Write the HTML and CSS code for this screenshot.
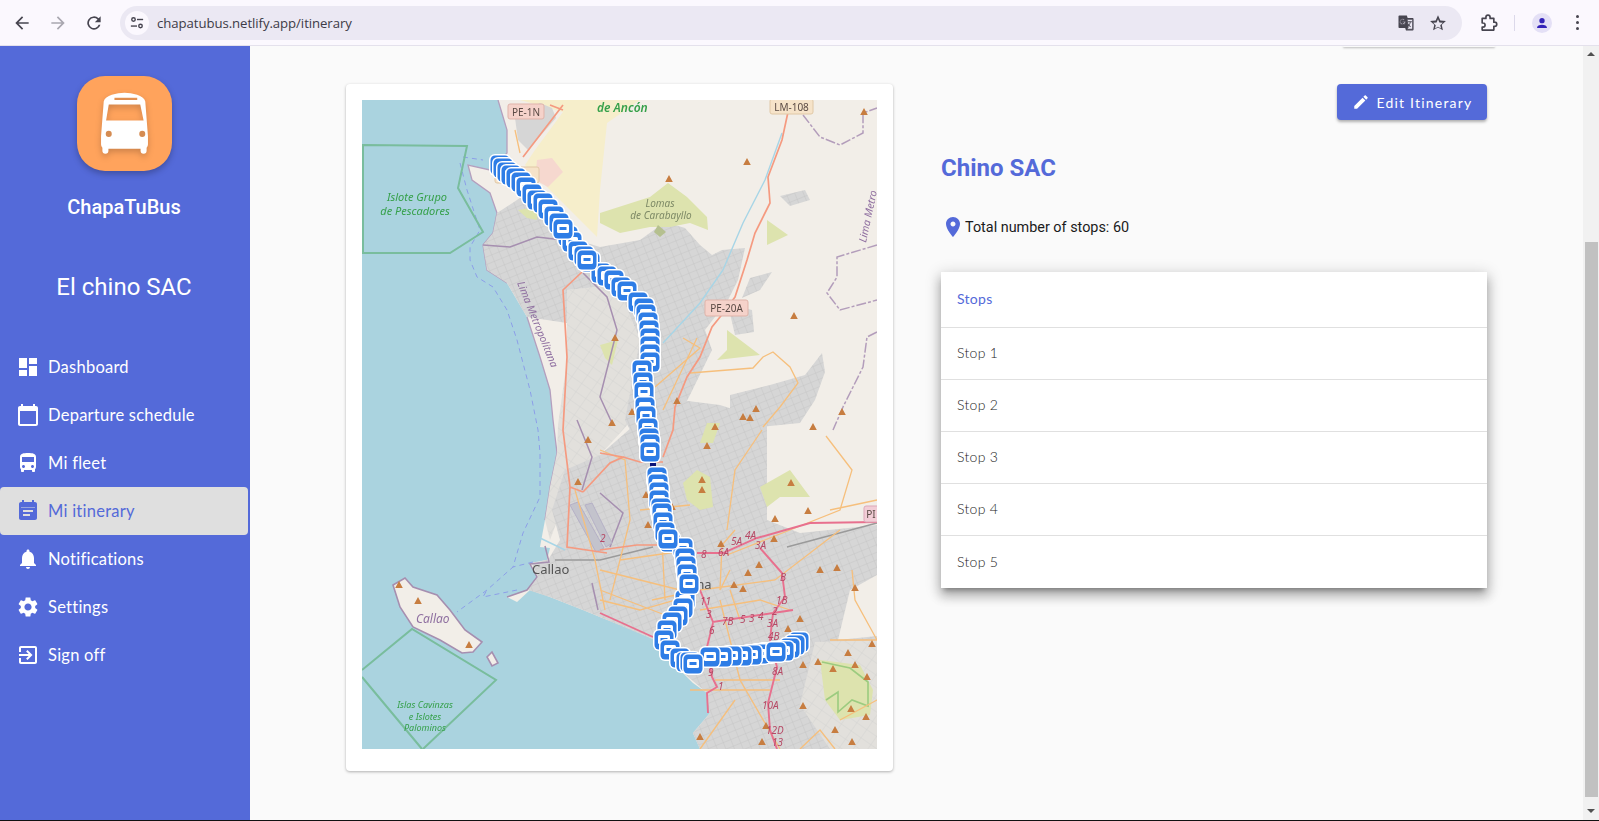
FILE: index.html
```html
<!DOCTYPE html>
<html lang="en">
<head>
  <meta charset="UTF-8" />
  <title>ChapaTuBus - Itinerary</title>
  <meta name="viewport" content="width=device-width, initial-scale=1.0" />
  <link rel="stylesheet" href="styles.css">
</head>
<body>
  <!-- browser toolbar -->
  <header class="toolbar">
    <div class="nav-btns">
      <svg class="tb-icon" viewBox="0 0 24 24"><path d="M20 11H7.800l5.600-5.600L12 4l-8 8 8 8 1.400-1.400L7.800 13H20z"/></svg>
      <svg class="tb-icon muted" viewBox="0 0 24 24"><path d="M4 11h12.200l-5.600-5.600L12 4l8 8-8 8-1.400-1.400 5.600-5.600H4z"/></svg>
      <svg class="tb-icon" viewBox="0 0 24 24"><path d="M17.600 6.400A8 8 0 1 0 19.700 14h-2.100a6 6 0 1 1-1.400-6.200L13 11h7V4z"/></svg>
    </div>
    <div class="urlbar">
      <span class="site-info">
        <svg viewBox="0 0 16 16"><circle cx="4" cy="4" r="2" class="ring"/><path d="M8 3.200h7v1.600H8z"/><circle cx="12" cy="11.500" r="2" class="ring"/><path d="M1 10.700h7v1.600H1z"/></svg>
      </span>
      <span class="url">chapatubus.netlify.app/itinerary</span>
      <span class="url-actions">
        <svg class="tb-icon" viewBox="0 0 24 24"><path d="M4 3h9l1 3h6c.6 0 1 .4 1 1v13c0 .6-.4 1-1 1h-8l-1-3H4c-.6 0-1-.4-1-1V4c0-.6.4-1 1-1z"/><path class="cut" d="M13.300 7.500H20v12h-7l1.600-2.400z"/><path class="cut" d="M8 7a3.500 3.500 0 1 0 3.300 4.700V10H8v1.300h1.800A2.200 2.200 0 1 1 9.400 8.800l.9-.9A3.400 3.400 0 0 0 8 7z"/><path d="M14.500 10h4.500v1h-1.300c-.3 1.500-1 2.700-1.700 3.500l1.800 1.800-.6.700-1.900-1.800-1.300 1.100-.4-.9 1.100-.9c-.4-.5-.7-1-.9-1.500h1c.2.300.4.600.6.800.5-.6 1-1.500 1.200-2.800h-2.100z"/></svg>
        <svg class="tb-icon" viewBox="0 0 24 24"><path d="M12 2.800l2.800 6.100 6.700.7-5 4.500 1.400 6.600L12 17.300l-5.900 3.400 1.400-6.600-5-4.500 6.700-.7zm0 4.700L10.300 11.400l-4.100.4 3.100 2.800-.9 4 3.600-2.100 3.600 2.100-.9-4 3.100-2.800-4.100-.4z" fill-rule="evenodd"/></svg>
      </span>
    </div>
    <div class="tb-right">
      <svg class="tb-icon puzzle" viewBox="0 0 24 24"><path d="M5 6.500h4.500V5a2.500 2.500 0 0 1 5 0v1.500H19V11h1a2.500 2.500 0 0 1 0 5h-1v4.500H5V17h1a2.500 2.500 0 0 0 0-5H5z"/></svg>
      <span class="tb-divider"></span>
      <span class="avatar">
        <svg viewBox="0 0 24 24"><circle cx="12" cy="8.500" r="4"/><path d="M4.500 19.500c0-3.500 3.500-5 7.500-5s7.500 1.500 7.500 5z"/></svg>
      </span>
      <span class="kebab"><i></i><i></i><i></i></span>
    </div>
  </header>

  <div class="app">
    <aside class="sidebar">
      <div class="logo">
        <svg viewBox="120 100 140 188">
          <path fill-rule="evenodd" d="M128 128c4-18 40-26 62-26s58 8 62 26l8 104v24c0 4-2 8-4 10v9a9 9 0 0 1-18 0v-6h-96v6a9 9 0 0 1-18 0v-9c-2-2-4-6-4-10v-24zM160 117v7h68v-7zM143 137l-8 48h112l-10-48z"/>
          <circle class="lamp" cx="143" cy="225" r="9"/>
          <circle class="lamp" cx="243" cy="225" r="9"/>
        </svg>
      </div>
      <div class="brand">ChapaTuBus</div>
      <div class="company">El chino SAC</div>

      <nav class="menu">
        <a class="menu-item"><svg viewBox="0 0 24 24"><path d="M3 13h8V3H3v10zm0 8h8v-6H3v6zm10 0h8V11h-8v10zm0-18v6h8V3h-8z"/></svg>Dashboard</a>
        <a class="menu-item"><svg viewBox="0 0 24 24"><path d="M20 3h-1V1h-2v2H7V1H5v2H4c-1.100 0-2 .9-2 2v16c0 1.100.9 2 2 2h16c1.100 0 2-.9 2-2V5c0-1.100-.9-2-2-2zm0 18H4V8h16v13z"/></svg>Departure schedule</a>
        <a class="menu-item"><svg viewBox="0 0 24 24"><path d="M4 16c0 .88.39 1.670 1 2.220V20c0 .55.45 1 1 1h1c.55 0 1-.45 1-1v-1h8v1c0 .55.45 1 1 1h1c.55 0 1-.45 1-1v-1.780c.61-.55 1-1.340 1-2.220V6c0-3.500-3.580-4-8-4s-8 .5-8 4v10zm3.500 1c-.83 0-1.500-.67-1.500-1.500S6.670 14 7.500 14s1.500.67 1.500 1.500S8.330 17 7.500 17zm9 0c-.83 0-1.500-.67-1.500-1.500s.67-1.500 1.500-1.500 1.500.67 1.500 1.500-.67 1.500-1.500 1.500zm1.500-6H6V6h12v5z"/></svg>Mi fleet</a>
        <a class="menu-item active"><svg viewBox="0 0 24 24"><path d="M19 3h-1V1h-2v2H8V1H6v2H5c-1.110 0-1.990.9-1.990 2L3 19c0 1.100.89 2 2 2h14c1.100 0 2-.9 2-2V5c0-1.100-.9-2-2-2zM14 17H7v-2h7v2zm3-4H7v-2h10v2zm2-4.500H5V8h14z"/></svg>Mi itinerary</a>
        <a class="menu-item"><svg viewBox="0 0 24 24"><path d="M12 22c1.100 0 2-.9 2-2h-4c0 1.100.9 2 2 2zm6-6v-5c0-3.070-1.630-5.640-4.500-6.320V4c0-.83-.67-1.500-1.500-1.500s-1.500.67-1.500 1.500v.68C7.640 5.360 6 7.920 6 11v5l-2 2v1h16v-1l-2-2z"/></svg>Notifications</a>
        <a class="menu-item"><svg viewBox="0 0 24 24"><path d="M19.140 12.940c.04-.3.06-.61.06-.94 0-.32-.02-.64-.07-.94l2.030-1.580c.18-.14.23-.41.12-.61l-1.920-3.320c-.12-.22-.37-.29-.59-.22l-2.390.96c-.5-.38-1.030-.7-1.620-.94l-.36-2.540c-.04-.24-.24-.41-.48-.41h-3.840c-.24 0-.43.17-.47.41l-.36 2.540c-.59.24-1.130.57-1.620.94l-2.390-.96c-.22-.08-.47 0-.59.22L2.740 8.870c-.12.21-.08.47.12.61l2.030 1.580c-.05.3-.09.63-.09.94s.02.64.07.94l-2.030 1.580c-.18.14-.23.41-.12.61l1.920 3.320c.12.22.37.29.59.22l2.390-.96c.5.38 1.030.7 1.620.94l.36 2.540c.05.24.24.41.48.41h3.840c.24 0 .44-.17.47-.41l.36-2.540c.59-.24 1.130-.56 1.620-.94l2.390.96c.22.08.47 0 .59-.22l1.920-3.320c.12-.22.07-.47-.12-.61l-2.010-1.580zM12 15.600c-1.980 0-3.600-1.620-3.600-3.600s1.620-3.600 3.600-3.600 3.600 1.620 3.600 3.600-1.620 3.600-3.600 3.600z"/></svg>Settings</a>
        <a class="menu-item"><svg viewBox="0 0 24 24"><path d="M10.090 15.590 11.500 17l5-5-5-5-1.410 1.410L12.670 11H3v2h9.670l-2.580 2.590zM19 3H5c-1.110 0-2 .9-2 2v4h2V5h14v14H5v-4H3v4c0 1.100.89 2 2 2h14c1.100 0 2-.9 2-2V5c0-1.100-.9-2-2-2z"/></svg>Sign off</a>
      </nav>
    </aside>

    <main class="content">
      <div class="peek-row"><div class="peek"></div></div>
      <div class="columns">
        <section class="map-card">
          <svg class="map" viewBox="362 100 515 649">
            <defs>
              <pattern id="streets" width="8" height="7" patternUnits="userSpaceOnUse" patternTransform="rotate(-22)">
                <rect width="8" height="7" class="st-bg"/>
                <path d="M0 0H8M0 0V7" class="st-line"/>
              </pattern>
              <pattern id="suburb" width="12" height="10" patternUnits="userSpaceOnUse" patternTransform="rotate(35)">
                <rect width="12" height="10" class="sb-bg"/>
                <path d="M0 0H12M0 0V10" class="sb-line"/>
              </pattern>
              <filter id="soft"><feGaussianBlur stdDeviation="0.55"/></filter>
              <filter id="softer"><feGaussianBlur stdDeviation="0.3"/></filter>
              <symbol id="bus" viewBox="-10 -10 20 20" overflow="visible">
                <rect class="b-halo" x="-11" y="-11" width="22" height="22" rx="6"/>
                <rect class="b-body" x="-9.500" y="-9.500" width="19" height="19" rx="4.500"/>
                <rect class="b-halo" x="-6" y="-5" width="12" height="9" rx="1.500"/>
                <rect class="b-body" x="-3.500" y="-2" width="7" height="3"/>
              </symbol>
            </defs>

            <rect class="sea" x="362" y="100" width="515" height="649"/>
            <g filter="url(#soft)">
              <polygon class="land" points="498,100 877,100 877,749 700,749 693,733 710,713 707,693 693,683 680,670 663,653 655,640 633,630 600,617 583,610 550,597 530,590 517,602 507,597 527,590 537,577 530,563 547,560 550,548 540,547 545,520 550,487 557,453 553,420 550,390 540,357 527,317 507,283 487,270 483,245 493,233 497,213 490,193 472,180 468,165 490,170 507,153 507,130"/>
              <polygon class="land coast" points="393,585 405,578 413,587 437,595 450,610 465,630 482,642 473,652 462,653 440,640 413,627 400,607"/>
              <polygon class="land coast" points="487,657 492,652 498,663 492,666"/>
              <path class="bound-solid" d="M498 100L507 130 507 153 490 170 468 165 472 180 490 193 497 213 493 233 483 245 487 270 507 283"/>
              <path class="bound-solid" d="M527 317L540 357 550 390 553 420 557 453 550 487 545 520"/>

              <polygon class="yellow" points="520,100 640,100 607,123 600,190 597,237 575,215 547,187 525,165 535,150 563,112"/>
              <polygon class="pinkzone" points="537,160 552,158 563,172 548,187 535,180"/>
              <polygon class="grayblock" points="515,118 540,103 552,108 556,118 528,150 518,140"/>

              <polygon class="suburb" points="567,290 617,285 640,340 632,420 600,455 565,450 558,425 567,360"/>
              <polygon class="suburb" points="558,425 600,455 565,500 550,540 545,520 550,487 557,453"/>
              <polygon class="urban" points="497,213 520,198 540,205 560,235 600,247 640,240 665,222 685,228 700,245 712,255 722,250 745,248 738,280 728,300 705,330 712,350 690,395 672,430 640,450 625,420 640,340 617,285 567,290 567,323 527,317 507,283 487,270 483,245 493,233"/>
              <polygon class="urban" points="750,278 772,272 760,290 742,298"/>
              <polygon class="urban" points="728,305 752,310 754,332 735,335"/>
              <polygon class="urban" points="780,196 805,190 810,200 790,206"/>
              <polygon class="urban" points="730,395 770,385 805,375 822,353 825,372 815,400 800,423 730,430"/>
              <polygon class="urban" points="560,540 552,510 565,470 600,455 640,420 680,400 720,405 767,420 767,520 800,533 877,525 877,749 700,749 693,733 710,713 707,693 680,670 663,653 655,640 600,617 570,597 545,565"/>
              <polygon class="urban" points="545,560 532,564 538,577 528,590 550,597 583,610 600,617 620,600 600,560"/>
              <polygon class="suburb" points="815,642 877,640 877,749 830,749 800,705"/>
              <polygon class="land" points="850,590 877,575 877,636 838,640"/>

              <polygon class="scrub" points="600,223 600,213 650,197 668,183 687,197 707,217 708,230 690,223 670,227 650,227 620,233"/>
              <polygon class="scrub" points="683,483 697,470 710,477 713,507 700,510 687,500"/>
              <polygon class="scrub" points="707,423 720,423 713,443 700,443"/>
              <polygon class="scrub" points="760,487 790,470 810,497 780,497 767,507"/>
              <polygon class="scrub" points="727,330 760,355 717,360 727,350"/>
              <polygon class="scrub" points="767,220 788,235 767,245"/>
              <polygon class="scrub" points="518,210 538,207 537,220 527,218"/>
              <polygon class="scrub" points="600,345 618,340 612,365 605,358"/>
              <polygon class="scrub" points="820,660 860,665 873,690 870,715 840,720 825,700"/>
              <path class="tree-line" d="M822 662L850 668 868 682 868 706 852 700 838 712 838 692 826 700"/>
              <polygon class="wood" points="658,225 654,232 660,237 666,232"/>

              <path class="bound" d="M483 245L510 247 537 237 563 240M583 273L607 297 617 330 600 397 612 423M577 420L592 457 582 490M600 493L623 513 610 547M592 583L598 610"/>
              <path class="bound dash" d="M803 115L820 137 840 145 863 133 863 113 877 108M877 245L837 257 837 277 827 293 840 310 877 300M877 332L867 337 863 367 843 407 833 430"/>
              <path class="bound" d="M545 546L549 562 530 564 537 577 527 590 507 597"/>

              <path class="river" d="M782 133L765 180 743 223 723 270 700 303 663 343M540 538L565 550"/>
              <polygon class="runway" points="570,505 578,502 604,548 596,552"/>
              <polygon class="runway" points="585,505 592,503 612,543 606,547"/>

              <path class="rail" d="M555 560L600 560 653 547M787 547L877 523"/>

              <path class="orange" d="M515 130L520 153M690 373L753 368 763 357 773 352 790 367 798 383 780 407 763 427M683 338L700 348 655 387M697 338L663 410M675 600L640 610 600 600M600 450L625 460 630 520 610 600M575 490L595 560 605 610M620 560L690 550M640 510L690 505M660 500L665 600M600 570L680 590M735 530L722 545 720 590 730 570M762 430L735 470 727 530M727 555L790 530 840 510 852 470 826 436M652 600L700 590 775 580 840 530M700 610L760 600 790 610M720 600L740 680 780 749M715 680L780 680M690 690L770 690M830 640L877 640 855 600 852 570M600 590L665 615M735 700L700 749M840 720L877 700M800 749L820 730 835 749M740 620L730 590M830 510L877 500"/>
              <path class="salmon" d="M788 112L782 140 768 177 770 203 755 233 747 260 735 297 720 317 712 327 700 357 687 377 675 407 673 430 663 457M563 105L523 157M550 105L563 110M582 272L563 290 567 357 563 430 570 487 567 547 607 553M583 492L610 463 623 457 600 453M623 457L640 462 663 462M600 550L637 545 657 545M570 487L583 492"/>
              <path class="pink" d="M877 522L810 523 757 538 723 553 697 553M760 548L782 573 785 597 773 613 770 640 777 667 768 703 770 730 777 749M700 590L713 622 773 613 793 610M713 623L707 647 712 677 717 687 707 693 708 713M600 613L653 637"/>
              <path class="sea-dash" d="M463 157L483 160M460 163L467 190 480 230 470 247 470 260 477 277 493 287 507 310 517 340 530 390 538 430 540 453 540 497 523 533 513 567 487 590 457 612M533 562L513 567M517 590L483 597 487 590"/>

              <path class="protected" d="M363 145L467 146 458 188 483 232 450 253 363 253z"/>
              <path class="protected" d="M362 670L412 629 496 680 423 749M362 677L422 749"/>
            </g>

            <g class="peaks" filter="url(#softer)">
              <path d="M864 108l3.800 7h-7.600zM747 158l3.800 7h-7.600zM669 175l3.800 7h-7.600zM794 312l3.800 7h-7.600zM615 334l3.800 7h-7.600zM677 397l3.800 7h-7.600zM632 408l3.800 7h-7.600zM612 419l3.800 7h-7.600zM743 413l3.800 7h-7.600zM750 414l3.800 7h-7.600zM756 405l3.800 7h-7.600zM842 408l3.800 7h-7.600zM715 423l3.800 7h-7.600zM813 423l3.800 7h-7.600zM707 442l3.800 7h-7.600zM702 476l3.800 7h-7.600zM702 486l3.800 7h-7.600zM646 491l3.800 7h-7.600zM672 503l3.800 7h-7.600zM791 479l3.800 7h-7.600zM808 507l3.800 7h-7.600zM775 515l3.800 7h-7.600zM648 521l3.800 7h-7.600zM774 535l3.800 7h-7.600zM721 540l3.800 7h-7.600zM759 561l3.800 7h-7.600zM748 569l3.800 7h-7.600zM837 564l3.800 7h-7.600zM820 566l3.800 7h-7.600zM734 581l3.800 7h-7.600zM743 585l3.800 7h-7.600zM855 584l3.800 7h-7.600zM800 615l3.800 7h-7.600zM788 625l3.800 7h-7.600zM872 640l3.800 7h-7.600zM848 649l3.800 7h-7.600zM818 658l3.800 7h-7.600zM803 661l3.800 7h-7.600zM833 665l3.800 7h-7.600zM855 661l3.800 7h-7.600zM867 673l3.800 7h-7.600zM803 702l3.800 7h-7.600zM851 705l3.800 7h-7.600zM866 713l3.800 7h-7.600zM766 722l3.800 7h-7.600zM835 726l3.800 7h-7.600zM852 738l3.800 7h-7.600zM762 738l3.800 7h-7.600zM700 733l3.800 7h-7.600zM588 436l3.800 7h-7.600zM578 478l3.800 7h-7.600zM399 581l3.800 7h-7.600zM418 597l3.800 7h-7.600zM469 641l3.800 7h-7.600z"/>
            </g>

            <g filter="url(#softer)">
              <rect class="shield-red" x="508" y="104" width="36" height="15" rx="2"/>
              <text class="shield-text" x="526" y="115.500">PE-1N</text>
              <rect class="shield-tan" x="495" y="167" width="44" height="16" rx="2"/>
              <rect class="shield-tan" x="770" y="99" width="43" height="15" rx="2"/>
              <text class="shield-text" x="791.500" y="110.500">LM-108</text>
              <rect class="shield-red" x="705" y="300" width="43" height="16" rx="2"/>
              <text class="shield-text" x="726.500" y="312">PE-20A</text>
              <rect class="shield-pink" x="864" y="506" width="20" height="16" rx="2"/>
              <text class="shield-text" x="871" y="518">PI</text>

              <text class="lb-green big" x="597" y="112">de Ancón</text>
              <text class="lb-green" x="417" y="201" text-anchor="middle">Islote Grupo</text>
              <text class="lb-green" x="415" y="215" text-anchor="middle">de Pescadores</text>
              <text class="lb-green small" x="425" y="708" text-anchor="middle">Islas Cavinzas</text>
              <text class="lb-green small" x="425" y="720" text-anchor="middle">e Islotes</text>
              <text class="lb-green small" x="425" y="731" text-anchor="middle">Palominos</text>
              <text class="lb-hill" x="660" y="207" text-anchor="middle">Lomas</text>
              <text class="lb-hill" x="661" y="219" text-anchor="middle">de Carabayllo</text>
              <text class="lb-purple" transform="translate(517 283) rotate(68)">Lima Metropolitana</text>
              <text class="lb-purple" transform="translate(866 243) rotate(-78)">Lima Metro</text>
              <text class="lb-purple big" x="416" y="623">Callao</text>
              <text class="lb-city" x="532" y="574">Callao</text>
              <text class="lb-city" x="682" y="589">Lima</text>

              <text class="route" x="701" y="558">8</text>
              <text class="route" x="718" y="556">6A</text>
              <text class="route" x="731" y="545">5A</text>
              <text class="route" x="745" y="539">4A</text>
              <text class="route" x="755" y="549">3A</text>
              <text class="route" x="780" y="581">B</text>
              <text class="route" x="776" y="604">1B</text>
              <text class="route" x="772" y="615">2</text>
              <text class="route" x="767" y="627">3A</text>
              <text class="route" x="768" y="640">4B</text>
              <text class="route" x="722" y="625">7B</text>
              <text class="route" x="740" y="623">5</text>
              <text class="route" x="749" y="622">3</text>
              <text class="route" x="758" y="620">4</text>
              <text class="route" x="700" y="605">11</text>
              <text class="route" x="706" y="618">3</text>
              <text class="route" x="709" y="634">6</text>
              <text class="route" x="708" y="676">9</text>
              <text class="route" x="718" y="690">1</text>
              <text class="route" x="772" y="675">8A</text>
              <text class="route" x="762" y="709">10A</text>
              <text class="route" x="766" y="734">12D</text>
              <text class="route" x="772" y="746">13</text>
              <text class="route" x="600" y="542">2</text>
            </g>

            <rect class="gap-mark" x="650" y="461" width="6" height="9"/>

            <g class="markers" filter="url(#softer)">
              <use href="#bus" x="490" y="155" width="20" height="20"/>
              <use href="#bus" x="493" y="158" width="20" height="20"/>
              <use href="#bus" x="497" y="162" width="20" height="20"/>
              <use href="#bus" x="501" y="165" width="20" height="20"/>
              <use href="#bus" x="506" y="168" width="20" height="20"/>
              <use href="#bus" x="511" y="172" width="20" height="20"/>
              <use href="#bus" x="516" y="177" width="20" height="20"/>
              <use href="#bus" x="522" y="184" width="20" height="20"/>
              <use href="#bus" x="527" y="190" width="20" height="20"/>
              <use href="#bus" x="533" y="193" width="20" height="20"/>
              <use href="#bus" x="538" y="199" width="20" height="20"/>
              <use href="#bus" x="544" y="206" width="20" height="20"/>
              <use href="#bus" x="549" y="213" width="20" height="20"/>
              <use href="#bus" x="558" y="226" width="20" height="20"/>
              <use href="#bus" x="562" y="232" width="20" height="20"/>
              <use href="#bus" x="568" y="241" width="20" height="20"/>
              <use href="#bus" x="574" y="246" width="20" height="20"/>
              <use href="#bus" x="580" y="252" width="20" height="20"/>
              <use href="#bus" x="591" y="263" width="20" height="20"/>
              <use href="#bus" x="597" y="266" width="20" height="20"/>
              <use href="#bus" x="604" y="270" width="20" height="20"/>
              <use href="#bus" x="611" y="277" width="20" height="20"/>
              <use href="#bus" x="617" y="281" width="20" height="20"/>
              <use href="#bus" x="628" y="292" width="20" height="20"/>
              <use href="#bus" x="634" y="298" width="20" height="20"/>
              <use href="#bus" x="636" y="304" width="20" height="20"/>
              <use href="#bus" x="638" y="312" width="20" height="20"/>
              <use href="#bus" x="639" y="320" width="20" height="20"/>
              <use href="#bus" x="640" y="328" width="20" height="20"/>
              <use href="#bus" x="640" y="336" width="20" height="20"/>
              <use href="#bus" x="640" y="344" width="20" height="20"/>
              <use href="#bus" x="640" y="352" width="20" height="20"/>
              <use href="#bus" x="632" y="360" width="20" height="20"/>
              <use href="#bus" x="633" y="372" width="20" height="20"/>
              <use href="#bus" x="634" y="382" width="20" height="20"/>
              <use href="#bus" x="635" y="397" width="20" height="20"/>
              <use href="#bus" x="636" y="406" width="20" height="20"/>
              <use href="#bus" x="638" y="418" width="20" height="20"/>
              <use href="#bus" x="639" y="428" width="20" height="20"/>
              <use href="#bus" x="640" y="434" width="20" height="20"/>
              <use href="#bus" x="647" y="467" width="20" height="20"/>
              <use href="#bus" x="648" y="474" width="20" height="20"/>
              <use href="#bus" x="649" y="482" width="20" height="20"/>
              <use href="#bus" x="649" y="490" width="20" height="20"/>
              <use href="#bus" x="651" y="498" width="20" height="20"/>
              <use href="#bus" x="652" y="503" width="20" height="20"/>
              <use href="#bus" x="653" y="512" width="20" height="20"/>
              <use href="#bus" x="655" y="522" width="20" height="20"/>
              <use href="#bus" x="660" y="532" width="20" height="20"/>
              <use href="#bus" x="673" y="538" width="20" height="20"/>
              <use href="#bus" x="675" y="548" width="20" height="20"/>
              <use href="#bus" x="676" y="556" width="20" height="20"/>
              <use href="#bus" x="677" y="564" width="20" height="20"/>
              <use href="#bus" x="678" y="574" width="20" height="20"/>
              <use href="#bus" x="675" y="590" width="20" height="20"/>
              <use href="#bus" x="673" y="598" width="20" height="20"/>
              <use href="#bus" x="668" y="606" width="20" height="20"/>
              <use href="#bus" x="662" y="612" width="20" height="20"/>
              <use href="#bus" x="657" y="620" width="20" height="20"/>
              <use href="#bus" x="654" y="630" width="20" height="20"/>
              <use href="#bus" x="660" y="640" width="20" height="20"/>
              <use href="#bus" x="670" y="648" width="20" height="20"/>
              <use href="#bus" x="676" y="652" width="20" height="20"/>
              <use href="#bus" x="680" y="652" width="20" height="20"/>
              <use href="#bus" x="789" y="632" width="20" height="20"/>
              <use href="#bus" x="785" y="635" width="20" height="20"/>
              <use href="#bus" x="780" y="638" width="20" height="20"/>
              <use href="#bus" x="774" y="641" width="20" height="20"/>
              <use href="#bus" x="757" y="643" width="20" height="20"/>
              <use href="#bus" x="750" y="644" width="20" height="20"/>
              <use href="#bus" x="742" y="645" width="20" height="20"/>
              <use href="#bus" x="732" y="646" width="20" height="20"/>
              <use href="#bus" x="722" y="646" width="20" height="20"/>
              <use href="#bus" x="712" y="647" width="20" height="20"/>
              <use href="#bus" x="700" y="647" width="20" height="20"/>
              <use href="#bus" x="766" y="642" width="20" height="20"/>
              <use href="#bus" x="683" y="654" width="20" height="20"/>
              <use href="#bus" x="679" y="574" width="20" height="20"/>
              <use href="#bus" x="658" y="529" width="20" height="20"/>
              <use href="#bus" x="640" y="442" width="20" height="20"/>
              <use href="#bus" x="553" y="219" width="20" height="20"/>
              <use href="#bus" x="577" y="250" width="20" height="20"/>
            </g>
          </svg>
        </section>

        <section class="details">
          <div class="details-top">
            <button class="edit-btn">
              <svg viewBox="0 0 24 24"><path d="M3 17.250V21h3.750L17.810 9.940l-3.750-3.750L3 17.250zM20.710 7.040c.39-.39.39-1.020 0-1.410l-2.340-2.340c-.39-.39-1.020-.39-1.410 0l-1.830 1.830 3.750 3.750 1.830-1.830z"/></svg>
              Edit Itinerary
            </button>
          </div>
          <h2 class="route-name">Chino SAC</h2>
          <div class="stop-count">
            <svg viewBox="0 0 24 24"><path d="M12 2C8.130 2 5 5.130 5 9c0 5.250 7 13 7 13s7-7.750 7-13c0-3.870-3.130-7-7-7zm0 9.500c-1.380 0-2.500-1.120-2.500-2.500s1.120-2.500 2.500-2.500 2.500 1.120 2.500 2.500-1.120 2.500-2.500 2.500z"/></svg>
            Total number of stops: 60
          </div>
          <ul class="stops">
            <li class="stops-head">Stops</li>
            <li>Stop 1</li>
            <li>Stop 2</li>
            <li>Stop 3</li>
            <li>Stop 4</li>
            <li>Stop 5</li>
          </ul>
        </section>
      </div>
    </main>

    <div class="scrollbar">
      <span class="arrow up"></span>
      <div class="thumb"></div>
      <span class="arrow down"></span>
    </div>
  </div>
  <div class="bottom-line"></div>
</body>
</html>
```

FILE: styles.css
```css
* {
  box-sizing: border-box;
}

html, body {
  height: 100%;
  overflow: hidden;
}

body {
  margin: 0;
  display: flex;
  flex-direction: column;
  font-family: Roboto, sans-serif;
  background: #fafafa;
}

/* browser toolbar */
.toolbar {
  height: 46px;
  flex: none;
  display: flex;
  align-items: center;
  background: #fbf8fe;
  border-bottom: 1px solid #e4e1ec;
}

.tb-icon {
  width: 20px;
  height: 20px;
  fill: #474550;
  display: block;
}

.tb-icon.muted {
  fill: #a9a7b0;
}

.tb-icon.puzzle {
  fill: none;
  stroke: #474550;
  stroke-width: 2;
  stroke-linejoin: round;
}

.nav-btns {
  display: flex;
  gap: 16px;
  padding-left: 12px;
  width: 120px;
}

.urlbar {
  width: 1342px;
  height: 34px;
  background: #ebe8f3;
  border-radius: 17px;
  display: flex;
  align-items: center;
  padding-left: 5px;
}

.site-info {
  width: 24px;
  height: 24px;
  border-radius: 50%;
  background: #fbf8fe;
  display: flex;
  align-items: center;
  justify-content: center;
}

.site-info svg {
  width: 14px;
  height: 14px;
  fill: #474550;
}

.site-info .ring {
  fill: none;
  stroke: #474550;
  stroke-width: 1.6;
}

.url {
  margin-left: 8px;
  font-family: "Open Sans", sans-serif;
  font-size: 13.200px;
  color: #3d3b46;
  letter-spacing: -.07px;
}

.url-actions {
  margin-left: auto;
  display: flex;
  gap: 12px;
  padding-right: 14px;
}

.url-actions .cut {
  fill: #ebe8f3;
  stroke: #474550;
  stroke-width: 1;
}

.tb-right {
  display: flex;
  align-items: center;
  flex: 1;
  padding-left: 16px;
}

.tb-divider {
  width: 1px;
  height: 16px;
  background: #dcd9ea;
  margin-left: 16px;
}

.avatar {
  width: 20px;
  height: 20px;
  border-radius: 50%;
  background: #e4e0f6;
  margin-left: 17px;
  display: flex;
  align-items: center;
  justify-content: center;
}

.avatar svg {
  width: 16px;
  height: 16px;
  fill: #3423b8;
}

.kebab {
  margin-left: 24px;
  display: flex;
  flex-direction: column;
  gap: 3px;
}

.kebab i {
  display: block;
  width: 3px;
  height: 3px;
  border-radius: 50%;
  background: #474550;
}

/* page */
.app {
  flex: 1;
  min-height: 0;
  display: flex;
}

.sidebar {
  width: 250px;
  flex: none;
  background: #546ad9;
  color: #fff;
  display: flex;
  flex-direction: column;
  align-items: center;
  padding: 30px 2px 0 0;
}

.logo {
  width: 95px;
  height: 95px;
  border-radius: 28px;
  background: #ffa35c;
  box-shadow: 0 3px 6px rgba(0, 0, 0, .25);
  display: flex;
  align-items: center;
  justify-content: center;
}

.logo svg {
  width: 47px;
  height: 63px;
  fill: #fff;
  filter: drop-shadow(0 3px 3px rgba(0, 0, 0, .2));
}

.logo .lamp {
  fill: #d58c52;
}

.brand {
  margin-top: 24px;
  font-size: 20px;
  font-weight: 500;
  line-height: 24px;
}

.company {
  margin-top: 52px;
  font-size: 24px;
  line-height: 32px;
}

.menu {
  width: 100%;
  margin-top: 40px;
}

.menu-item {
  height: 48px;
  width: 248px;
  display: flex;
  align-items: center;
  gap: 8px;
  padding-left: 16px;
  font-family: Lato, sans-serif;
  font-size: 16.500px;
  letter-spacing: .25px;
  color: #fff;
  border-radius: 4px;
}

.menu-item svg {
  width: 24px;
  height: 24px;
  fill: #fff;
  flex: none;
}

.menu-item.active {
  background: #dfdfdf;
  color: #546ad9;
}

.menu-item.active svg {
  fill: #546ad9;
}

.content {
  flex: 1;
  min-width: 0;
  padding-left: 96px;
  overflow: hidden;
}

.peek-row {
  height: 1px;
  padding-left: 997px;
}

.peek {
  width: 152px;
  height: 1px;
  background: #fafafa;
  border-bottom-left-radius: 4px;
  border-bottom-right-radius: 4px;
  box-shadow: 0 1px 2px rgba(0, 0, 0, .35);
}

.columns {
  display: flex;
  gap: 48px;
  margin-top: 37px;
  align-items: flex-start;
}

.map-card {
  width: 547px;
  height: 687px;
  padding: 16px;
  background: #fff;
  border-radius: 4px;
  box-shadow: 0 1px 3px rgba(0, 0, 0, .3);
}

.map {
  width: 515px;
  height: 649px;
  display: block;
}

/* map drawing */
.sea { fill: #aad3df; }
.land { fill: #f2eee8; }
.coast { stroke: #a68fb0; stroke-width: 1.6; }
.bound-solid { fill: none; stroke: #b49fbe; stroke-width: 1.3; }
.yellow { fill: #f6eecb; }
.pinkzone { fill: #f6d8cf; }
.grayblock { fill: #d6d6d6; }
.urban { fill: url(#streets); }
.suburb { fill: url(#suburb); }
.st-bg { fill: #d6d6d6; }
.st-line { fill: none; stroke: #c0c0c0; stroke-width: .7; }
.sb-bg { fill: #e2e0dc; }
.sb-line { fill: none; stroke: #cfcfcd; stroke-width: .7; }
.scrub { fill: #dde3ae; }
.wood { fill: #b5c08f; }
.tree-line { fill: none; stroke: #9ccb7f; stroke-width: 1.6; }
.bound { fill: none; stroke: #a68fb0; stroke-width: 1.5; }
.bound.dash { stroke-dasharray: 10 2 3 2; stroke: #b39dbb; }
.river { fill: none; stroke: #a7d5e6; stroke-width: 1.4; }
.runway { fill: #c3c3cc; stroke: #b5b0c6; stroke-width: 1; }
.rail { fill: none; stroke: #9a9a9a; stroke-width: 1.3; }
.orange { fill: none; stroke: #f6bf7c; stroke-width: 1.3; }
.salmon { fill: none; stroke: #f59a80; stroke-width: 1.7; }
.pink { fill: none; stroke: #e8708e; stroke-width: 1.9; }
.sea-dash { fill: none; stroke: #8c9ee8; stroke-width: 1; stroke-dasharray: 5 4; }
.protected { fill: none; stroke: #79bd9d; stroke-width: 2; }
.peaks { fill: #c77d40; }

.shield-red { fill: #f5d2ca; stroke: #dfb3a9; }
.shield-tan { fill: #f6e3c9; stroke: #e1c8a6; }
.shield-pink { fill: #f2cdd6; stroke: #dba9b8; }
.shield-text {
  font-family: "Noto Sans", sans-serif;
  font-size: 10px;
  fill: #5a4a44;
  text-anchor: middle;
}

.lb-green, .lb-hill, .lb-purple, .route {
  font-family: "Noto Sans", sans-serif;
  font-style: italic;
}

.lb-green { font-size: 11px; fill: #35a04a; }
.lb-green.big { font-size: 12px; font-weight: 600; }
.lb-green.small { font-size: 9px; }
.lb-hill { font-size: 10px; fill: #7e8a66; }
.lb-purple { font-size: 10.500px; fill: #8f6fa0; }
.lb-purple.big { font-size: 12px; }
.lb-city { font-family: "Noto Sans", sans-serif; font-size: 13px; fill: #555; }
.route { font-size: 10px; fill: #b64a66; }

.gap-mark { fill: #0b1378; }
.b-halo { fill: #fff; }
.b-body { fill: #2f7de6; }

/* right column */
.details {
  width: 546px;
}

.details-top {
  display: flex;
  justify-content: flex-end;
}

.edit-btn {
  width: 150px;
  height: 36px;
  border: none;
  border-radius: 4px;
  background: #546ad9;
  color: #fff;
  font-family: Lato, sans-serif;
  font-size: 14px;
  font-weight: 400;
  letter-spacing: 1.200px;
  box-shadow: 0 2px 3px rgba(0, 0, 0, .3);
  display: flex;
  align-items: center;
  justify-content: center;
  gap: 7px;
}

.edit-btn svg {
  width: 18px;
  height: 18px;
  fill: #fff;
}

.route-name {
  margin: 32px 0 0;
  font-size: 24px;
  line-height: 32px;
  font-weight: 700;
  color: #546ad9;
}

.stop-count {
  margin-top: 29px;
  height: 28px;
  display: flex;
  align-items: center;
  font-size: 14.400px;
  color: #1b1b1b;
}

.stop-count svg {
  width: 24px;
  height: 24px;
  fill: #546ad9;
}

.stops {
  list-style: none;
  margin: 31px 0 0;
  padding: 0;
  background: #fff;
  box-shadow: 0 5px 5px -3px rgba(0, 0, 0, .3), 0 8px 10px 1px rgba(0, 0, 0, .2), 0 3px 14px 2px rgba(0, 0, 0, .16);
}

.stops li {
  height: 52px;
  padding: 0 16px 2px;
  display: flex;
  align-items: center;
  border-bottom: 1px solid #e0e0e0;
  font-family: Lato, sans-serif;
  font-weight: 300;
  font-size: 14px;
  letter-spacing: .3px;
  color: #1c1c1c;
}

.stops li:last-child {
  border-bottom: none;
  height: 52px;
}

.stops .stops-head {
  height: 56px;
  font-weight: 400;
  color: #546ad9;
}

/* page scrollbar */
.scrollbar {
  width: 16px;
  flex: none;
  background: #f1f1f1;
  display: flex;
  flex-direction: column;
  align-items: center;
}

.thumb {
  width: 13px;
  height: 555px;
  margin-top: 186px;
  background: #c1c1c1;
}

.arrow {
  width: 0;
  height: 0;
  border-left: 4px solid transparent;
  border-right: 4px solid transparent;
}

.arrow.up {
  margin-top: 6px;
  border-bottom: 4px solid #505050;
}

.arrow.down {
  margin-top: 12px;
  border-top: 4px solid #505050;
}

.bottom-line {
  height: 1px;
  flex: none;
  background: #111;
}
```
